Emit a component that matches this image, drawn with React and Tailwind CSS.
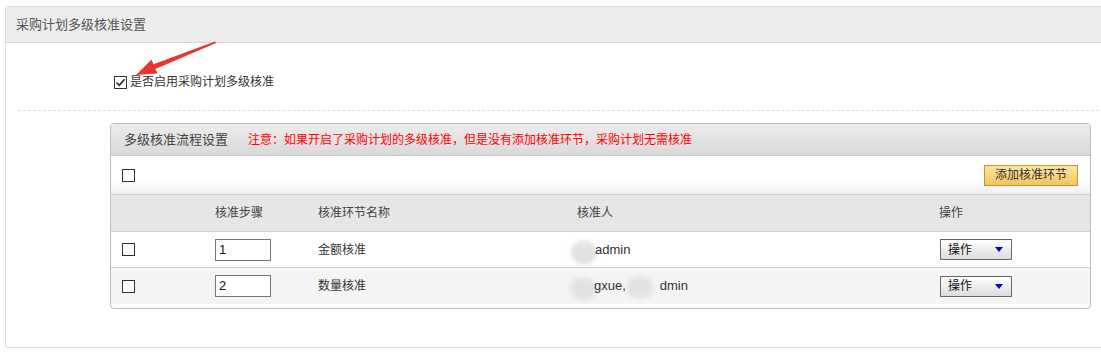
import React from "react";

const cn = '"Liberation Sans", "Noto Sans CJK SC", sans-serif';

function Box({ checked }) {
    return (
        <span className="inline-flex w-[13px] h-[13px] border border-[#333] bg-white items-center justify-center">
            {checked && (
                <svg width="11" height="11" viewBox="0 0 11 11">
                    <path d="M1.5 5.5 L4.3 8.3 L9.6 2.2" fill="none" stroke="#222" strokeWidth="1.5" />
                </svg>
            )}
        </span>
    );
}

function OpSelect() {
    return (
        <div className="w-[72px] h-[21px] border border-[#666] bg-gradient-to-b from-white to-[#dcdcdc] flex items-center justify-between pl-[7px] pr-[8px] text-[12px] text-[#111]">
            <span>操作</span>
            <svg width="8" height="5" viewBox="0 0 8 5">
                <path d="M0 0 H8 L4 5 Z" fill="#0000cc" />
            </svg>
        </div>
    );
}

function Blob({ className }) {
    return <span className={"absolute rounded-full bg-[#e2e2e2] blur-[2px] " + className} />;
}

const rows = [
    { step: "1", name: "金额核准", bg: "bg-white" },
    { step: "2", name: "数量核准", bg: "bg-[#f4f4f4]" },
];

export default function App() {
    return (
        <div className="relative w-[1101px] h-[356px] overflow-hidden bg-white pt-[6px] pl-[5px]" style={{ fontFamily: cn }}>
            <div className="w-[1120px] h-[342px] border border-[#dcdcdc] rounded-[3px]">
                <div className="h-[36px] bg-[#ececec] border-b border-[#d8d8d8] pl-[10px] flex items-center text-[13px] text-[#555]">
                    采购计划多级核准设置
                </div>

                <div className="pl-[12px]">
                    <div className="mt-[30px] ml-[96px] flex items-center gap-[3px] text-[12px] text-[#333]">
                        <Box checked />
                        <span>是否启用采购计划多级核准</span>
                    </div>
                    <div className="mt-[19px] border-t border-dashed border-[#dcdcdc]" />

                    <div className="mt-[12px] ml-[92px] w-[981px] h-[186px] border border-[#bcbcbc] rounded-[4px] overflow-hidden">
                        <div className="h-[32px] bg-gradient-to-b from-[#ececec] to-[#d9d9d9] border-b border-[#c4c4c4] flex items-center pl-[13px]">
                            <span className="text-[13px] text-[#444]">多级核准流程设置</span>
                            <span className="ml-[20px] text-[12px] text-[#ff0000]">
                                注意：如果开启了采购计划的多级核准，但是没有添加核准环节，采购计划无需核准
                            </span>
                        </div>

                        <div className="h-[39px] bg-gradient-to-b from-white from-60% to-[#f0f0f0] border-b border-[#d0d0d0] flex items-center justify-between pl-[11px] pr-[12px]">
                            <Box />
                            <button className="h-[21px] px-[10px] border border-[#c9962c] bg-gradient-to-b from-[#fbe6a2] to-[#f1c45a] text-[12px] text-[#333]">
                                添加核准环节
                            </button>
                        </div>

                        <div className="grid grid-cols-[104px_103px_259px_362px_1fr] h-[37px] bg-[#e6e6e6] border-b border-[#cfcfcf] items-center text-[12px] text-[#444]">
                            <span />
                            <span>核准步骤</span>
                            <span>核准环节名称</span>
                            <span>核准人</span>
                            <span>操作</span>
                        </div>

                        {rows.map((r, i) => (
                            <div
                                key={r.step}
                                className={
                                    "grid grid-cols-[104px_103px_259px_362px_1fr] h-[36px] items-center text-[12px] text-[#333] " +
                                    r.bg +
                                    (i === 0 ? " border-b border-[#d0d0d0]" : "")
                                }
                            >
                                <span className="pl-[11px] flex">
                                    <Box />
                                </span>
                                <span>
                                    <span className="flex items-center w-[56px] h-[22px] border border-[#777] bg-white pl-[3px] text-[13px] text-[#111]">
                                        {r.step}
                                    </span>
                                </span>
                                <span>{r.name}</span>
                                <span className="relative h-full flex items-center text-[13px]">
                                    {i === 0 ? (
                                        <>
                                            <Blob className="left-[-6px] top-[9px] w-[26px] h-[23px]" />
                                            <span className="relative ml-[18px]">admin</span>
                                        </>
                                    ) : (
                                        <>
                                            <Blob className="left-[-7px] top-[10px] w-[27px] h-[22px]" />
                                            <Blob className="left-[50px] top-[9px] w-[26px] h-[21px]" />
                                            <span className="relative ml-[17px]">gxue,</span>
                                            <span className="relative ml-[34px]">dmin</span>
                                        </>
                                    )}
                                </span>
                                <span className="pl-[1px]">
                                    <OpSelect />
                                </span>
                            </div>
                        ))}
                    </div>
                </div>
            </div>

            <svg className="absolute left-0 top-0 pointer-events-none" width="1101" height="356">
                <polygon
                    points="136,75 157.5,73.5 155.4,69 216,43 215,41.5 153.4,64.2 151.5,59.5"
                    fill="#e9352d"
                />
            </svg>
        </div>
    );
}
